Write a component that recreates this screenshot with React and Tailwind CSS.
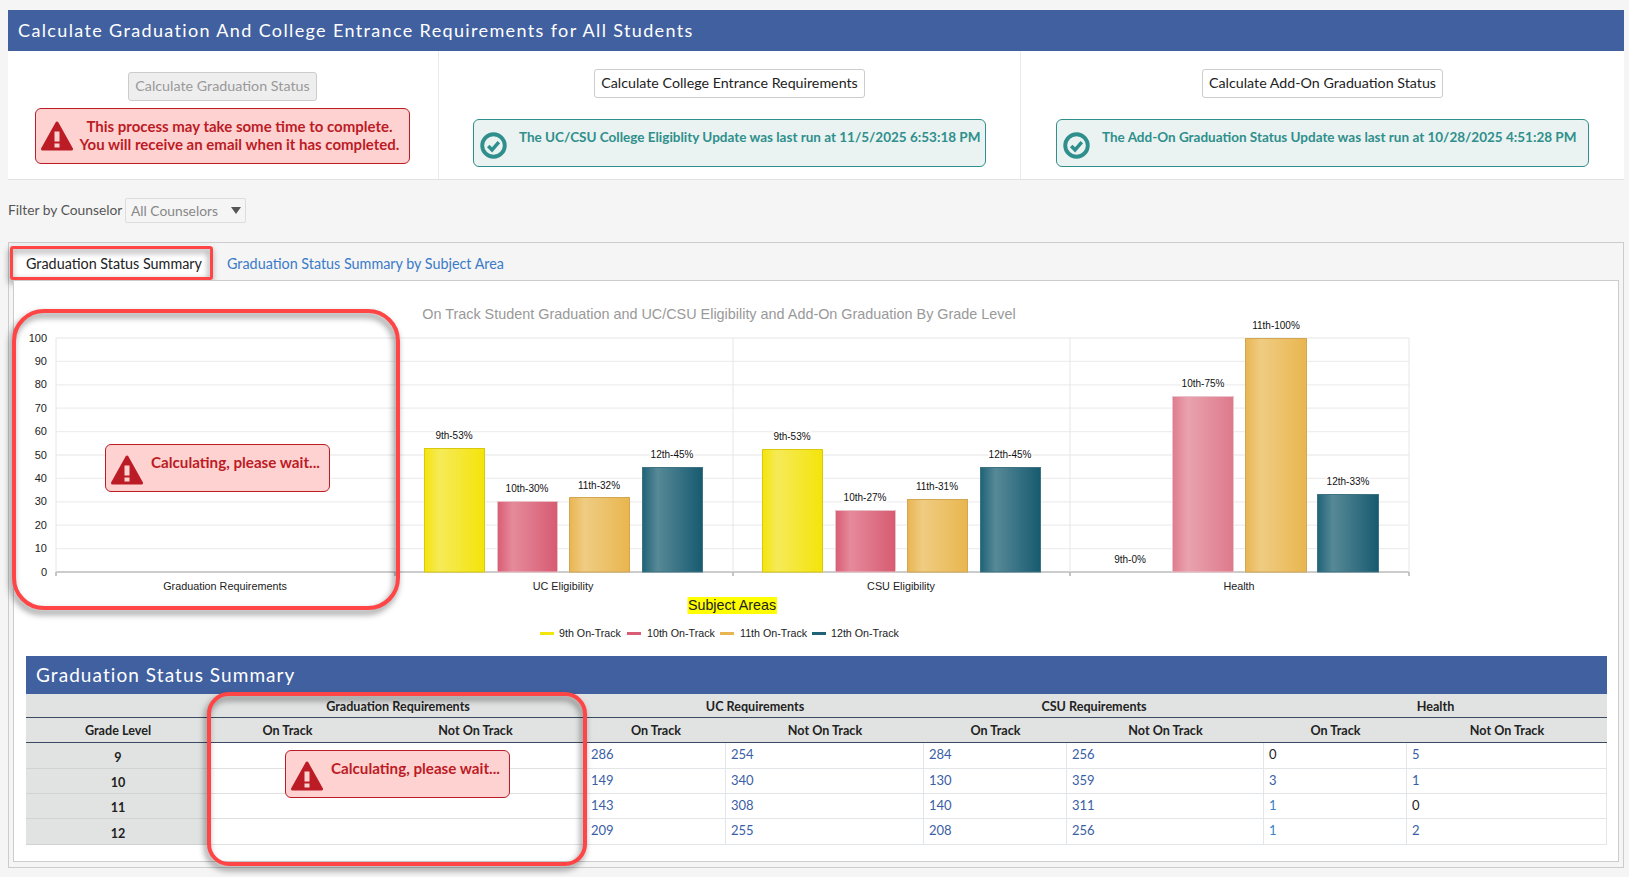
import React from 'react';

const gridYs = [338, 361.4, 384.8, 408.2, 431.6, 455, 478.4, 501.8, 525.2, 548.6, 572];
const axisY = 572;

const bars = [
  { id: 'yellow', x: 424, w: 60, top: 448, label: '9th-53%', lx: 454, ly: 435.5 },
  { id: 'pink', x: 497, w: 60, top: 501, label: '10th-30%', lx: 527, ly: 488.5 },
  { id: 'orange', x: 569, w: 60, top: 497, label: '11th-32%', lx: 599, ly: 485.5 },
  { id: 'teal', x: 642, w: 60, top: 467, label: '12th-45%', lx: 672, ly: 454.5 },
  { id: 'yellow', x: 762, w: 60, top: 449, label: '9th-53%', lx: 792, ly: 436.5 },
  { id: 'pink', x: 835, w: 60, top: 510, label: '10th-27%', lx: 865, ly: 497.5 },
  { id: 'orange', x: 907, w: 60, top: 499, label: '11th-31%', lx: 937, ly: 486.5 },
  { id: 'teal', x: 980, w: 60, top: 467, label: '12th-45%', lx: 1010, ly: 454.5 },
  { id: 'pinkLight', x: 1172, w: 61, top: 396, label: '10th-75%', lx: 1203, ly: 383 },
  { id: 'orange', x: 1245, w: 61, top: 338, label: '11th-100%', lx: 1276, ly: 325 },
  { id: 'teal', x: 1317, w: 61, top: 494, label: '12th-33%', lx: 1348, ly: 481 },
];

const gradients = [
  { id: 'yellow', a: '#f4e40e', b: '#f6ea58', c: '#f4e40a' },
  { id: 'pink', a: '#d95d75', b: '#e58a9a', c: '#d75b72' },
  { id: 'pinkLight', a: '#df7c8e', b: '#e9a2ae', c: '#de7a8c' },
  { id: 'orange', a: '#e9b553', b: '#efcc82', c: '#e9b64f' },
  { id: 'teal', a: '#1f6377', b: '#578997', c: '#175a70' },
];

const strokes = { yellow: '#d9c90c', pink: '#e7c1c8', pinkLight: '#e9c4cb', orange: '#d2a653', teal: '#3f7283' };

const legend = [
  { color: '#f4e40e', x: 540, tx: 559, label: '9th On-Track' },
  { color: '#d95d75', x: 627, tx: 647, label: '10th On-Track' },
  { color: '#e9b553', x: 720, tx: 740, label: '11th On-Track' },
  { color: '#1f6377', x: 812, tx: 831, label: '12th On-Track' },
];

const rows = [
  { grade: 9, uc: [286, 254], csu: [284, 256], health: [0, 5] },
  { grade: 10, uc: [149, 340], csu: [130, 359], health: [3, 1] },
  { grade: 11, uc: [143, 308], csu: [140, 311], health: [1, 0] },
  { grade: 12, uc: [209, 255], csu: [208, 256], health: [1, 2] },
];

function WarningIcon({ className }) {
  return (
    <svg viewBox="0 0 32 30" className={className}>
      <path d="M16 2 L30.5 28 L1.5 28 Z" fill="#bb1c25" stroke="#bb1c25" strokeWidth="3" strokeLinejoin="round" />
      <rect x="13.5" y="10.5" width="5" height="10" fill="#ffd2d2" />
      <rect x="13.5" y="22.5" width="5" height="4" fill="#ffd2d2" />
    </svg>
  );
}

function CheckIcon() {
  return (
    <svg viewBox="0 0 28 28" className="w-[27px] h-[27px] shrink-0">
      <circle cx="14" cy="14" r="11.7" fill="none" stroke="#2f8f8c" strokeWidth="4" />
      <path d="M8.5 14.5 L12.5 18.5 L19.5 10.5" fill="none" stroke="#2f8f8c" strokeWidth="3.6" />
    </svg>
  );
}

function RunAlert({ children, className }) {
  return (
    <div className={`flex items-start gap-[12px] h-[48px] bg-[#eaf3f1] border border-[#2f8f8c] rounded-[6px] pl-[6px] pt-[9px] ${className}`}>
      <div className="pt-[3px]"><CheckIcon /></div>
      <p className="text-[13.5px] leading-[16px] font-bold text-[#2f8f8c] whitespace-nowrap">{children}</p>
    </div>
  );
}

function CalcAlert({ className }) {
  return (
    <div className={`absolute w-[225px] h-[48px] flex items-start gap-[8px] bg-[#ffd2d2] border border-[#bb1c25] rounded-[6px] pl-[5px] pt-[8px] ${className}`}>
      <WarningIcon className="w-[32px] h-[30px] shrink-0 mt-[2px]" />
      <p className="text-[15.2px] leading-[18px] font-bold text-[#bb1c25] whitespace-nowrap">Calculating, please wait...</p>
    </div>
  );
}

function NumCell({ value, light }) {
  let color = 'text-[#3a5ea5]';
  if (value === 0) color = 'text-[#222]';
  if (light) color = 'text-[#3a82c4]';
  return <td className={`pl-[5px] pb-[1px] border-b border-r border-[#e2e6e8] text-[13px] ${color}`}>{value}</td>;
}

export default function App() {
  return (
    <div className="min-h-screen bg-[#f5f5f5] pt-[10px] pl-[8px] pr-[5px] font-[family-name:Lato,sans-serif] overflow-hidden">
      <div className="h-[41px] bg-[#41609f] flex items-center pl-[10px] text-[18px] tracking-[1.36px] text-white">
        Calculate Graduation And College Entrance Requirements for All Students
      </div>

      <div className="flex h-[129px] bg-white border-b border-[#e2e2e2]">
        <div className="w-[431px] pr-[1px] border-r border-[#e4ecef] flex flex-col items-center pt-[21px]">
          <button className="h-[29px] w-[189px] pb-[2px] bg-[#eeeeee] border border-[#cccccc] rounded-[3px] text-[14.3px] text-[#999] whitespace-nowrap">
            Calculate Graduation Status
          </button>
          <div className="mt-[7px] w-[375px] h-[56px] flex items-center bg-[#ffd2d2] border border-[#bb1c25] rounded-[6px] pl-[5px]">
            <WarningIcon className="w-[32px] h-[30px] shrink-0" />
            <p className="flex-1 text-center text-[15px] leading-[18px] font-bold text-[#bb1c25] whitespace-nowrap pr-[3px] pb-[3px]">
              This process may take some time to complete.<br />You will receive an email when it has completed.
            </p>
          </div>
        </div>

        <div className="w-[582px] border-r border-[#e4ecef] flex flex-col items-center pt-[18px]">
          <button className="h-[29px] w-[271px] pb-[2px] bg-white border border-[#cccccc] rounded-[3px] text-[14.25px] text-[#222] whitespace-nowrap">
            Calculate College Entrance Requirements
          </button>
          <RunAlert className="mt-[21px] w-[513px]">
            The UC/CSU College Eligiblity Update was last run at 11/5/2025 6:53:18 PM
          </RunAlert>
        </div>

        <div className="flex-1 flex flex-col items-center pt-[18px]">
          <button className="h-[29px] w-[241px] pb-[2px] bg-white border border-[#cccccc] rounded-[3px] text-[14.25px] text-[#222] whitespace-nowrap">
            Calculate Add-On Graduation Status
          </button>
          <RunAlert className="mt-[21px] w-[533px]">
            The Add-On Graduation Status Update was last run at 10/28/2025 4:51:28 PM
          </RunAlert>
        </div>
      </div>

      <div className="flex items-center h-[25px] mt-[18px] text-[13.8px] text-[#555]">
        <span className="w-[117px]">Filter by Counselor</span>
        <div className="w-[121px] h-[25px] flex items-center justify-between border border-[#ddd] rounded-[2px] pl-[5px] pr-[4px] text-[#888]">
          <span className="pt-[1px]">All Counselors</span>
          <span className="w-0 h-0 border-l-[5px] border-r-[5px] border-t-[7px] border-l-transparent border-r-transparent border-t-[#555]"></span>
        </div>
      </div>

      <div className="relative mt-[19px] h-[626px] border border-[#cccccc] px-[4px]">
        <div className="flex h-[37px] items-end text-[14.35px]">
          <div className="h-[35px] w-[200px] pt-[2px] bg-white pl-[13px] flex items-center text-[#222]">Graduation Status Summary</div>
          <div className="h-[35px] pt-[2px] pl-[14px] flex items-center text-[#3a7bc8]">Graduation Status Summary by Subject Area</div>
        </div>
        <div className="absolute left-[1px] top-[3px] w-[203px] h-[34px] border-[3px] border-[#ff4545] rounded-[3px] drop-shadow-[-1px_3px_3px_rgba(0,0,0,0.5)]"></div>

        <div className="relative h-[582px] bg-white border border-[#cccccc]">
          <svg viewBox="14 281 1604 375" className="block w-[1604px] h-[375px] font-[family-name:'Liberation_Sans',Arial,sans-serif]">
            <defs>
              {gradients.map((g) => (
                <linearGradient key={g.id} id={g.id} x1="0" x2="1" y1="0" y2="0">
                  <stop offset="0" stopColor={g.a} />
                  <stop offset="0.25" stopColor={g.b} />
                  <stop offset="1" stopColor={g.c} />
                </linearGradient>
              ))}
            </defs>
            <text x="719" y="319" textAnchor="middle" fontSize="14.4" fill="#999">
              On Track Student Graduation and UC/CSU Eligibility and Add-On Graduation By Grade Level
            </text>

            {gridYs.map((y, i) => (
              <line key={y} x1="56" x2="1409" y1={y} y2={y} stroke={i === 10 ? '#999' : '#eeeeee'} strokeWidth={i === 10 ? 1 : 1.3} />
            ))}
            {[56, 395, 733, 1070, 1409].map((x) => (
              <line key={x} x1={x} x2={x} y1="338" y2="576" stroke="#e6e6e6" />
            ))}
            {[56, 395, 733, 1070, 1409].map((x) => (
              <line key={x} x1={x} x2={x} y1="572" y2="576" stroke="#999" />
            ))}
            {gridYs.map((y, i) => (
              <text key={y} x="47" y={y + 3.5} textAnchor="end" fontSize="11" fill="#222">{100 - i * 10}</text>
            ))}

            {bars.map((b) => (
              <g key={b.x}>
                <rect x={b.x + 0.5} y={b.top + 0.5} width={b.w} height={axisY - b.top - 0.5} fill={`url(#${b.id})`} stroke={strokes[b.id]} />
                <text x={b.lx} y={b.ly + 3.5} textAnchor="middle" fontSize="10" fill="#111" stroke="#fff" strokeWidth="3" paintOrder="stroke">{b.label}</text>
              </g>
            ))}
            <text x="1130" y="563" textAnchor="middle" fontSize="10" fill="#111" stroke="#fff" strokeWidth="3" paintOrder="stroke">9th-0%</text>

            <text x="225" y="590" textAnchor="middle" fontSize="10.8" fill="#222">Graduation Requirements</text>
            <text x="563" y="590" textAnchor="middle" fontSize="10.8" fill="#222">UC Eligibility</text>
            <text x="901" y="590" textAnchor="middle" fontSize="10.8" fill="#222">CSU Eligibility</text>
            <text x="1239" y="590" textAnchor="middle" fontSize="10.8" fill="#222">Health</text>

            <rect x="687.5" y="597" width="89.5" height="17" fill="#ffff00" />
            <text x="732" y="610" textAnchor="middle" fontSize="14.3" fill="#222">Subject Areas</text>

            {legend.map((l) => (
              <g key={l.label}>
                <rect x={l.x} y="632" width="14" height="3" fill={l.color} />
                <text x={l.tx} y="637" fontSize="10.7" fill="#222">{l.label}</text>
              </g>
            ))}
          </svg>

          <div className="mx-[12px] w-[1581px]">
            <div className="h-[38px] bg-[#41609f] flex items-center pl-[10px] text-[19px] tracking-[1.07px] text-white">Graduation Status Summary</div>
            <table className="table-fixed w-[1581px] border-separate border-spacing-0">
              <colgroup>
                {[184, 155, 221, 140, 198, 143, 197, 143, 200].map((w, i) => (
                  <col key={i} style={{ width: w }} />
                ))}
              </colgroup>
              <thead className="text-[12.6px] font-bold text-[#222] bg-[#e1e3e3]">
                <tr className="h-[24px]">
                  <th className="border-b border-[#3b4a63]"></th>
                  <th colSpan={2} className="border-b border-[#3b4a63] pt-[4px]">Graduation Requirements</th>
                  <th colSpan={2} className="border-b border-[#3b4a63] pt-[4px]">UC Requirements</th>
                  <th colSpan={2} className="border-b border-[#3b4a63] pt-[4px]">CSU Requirements</th>
                  <th colSpan={2} className="border-b border-[#3b4a63] pt-[4px]">Health</th>
                </tr>
                <tr className="h-[25px]">
                  <th className="border-b border-[#3b4a63] pt-[2px]">Grade Level</th>
                  {[0, 1, 2, 3].map((i) => (
                    <React.Fragment key={i}>
                      <th className="border-b border-[#3b4a63] pt-[2px]">On Track</th>
                      <th className="border-b border-[#3b4a63] pt-[2px]">Not On Track</th>
                    </React.Fragment>
                  ))}
                </tr>
              </thead>
              <tbody>
                {rows.map((r, i) => (
                  <tr key={r.grade} className={i === 0 || i === 3 ? 'h-[26px]' : 'h-[25px]'}>
                    <td className="bg-[#e1e3e3] border-b border-[#d0d3d3] text-center text-[12.6px] font-bold text-[#222] pt-[5px]">{r.grade}</td>
                    <td className="border-b border-[#e0e0e0]"></td>
                    <td className="border-b border-[#e0e0e0]"></td>
                    <NumCell value={r.uc[0]} />
                    <NumCell value={r.uc[1]} />
                    <NumCell value={r.csu[0]} />
                    <NumCell value={r.csu[1]} />
                    <NumCell value={r.health[0]} light={r.health[0] === 1} />
                    <NumCell value={r.health[1]} />
                  </tr>
                ))}
              </tbody>
            </table>
          </div>

          <div className="absolute -left-[2px] top-[28px] w-[388px] h-[301px] border-[4px] border-[#ff4545] rounded-[32px] drop-shadow-[-2px_4px_3px_rgba(0,0,0,0.5)]"></div>
          <CalcAlert className="left-[91px] top-[163px]" />
          <div className="absolute left-[193px] top-[411px] w-[380px] h-[174px] border-[4px] border-[#ff4545] rounded-[22px] drop-shadow-[-2px_4px_3px_rgba(0,0,0,0.5)]"></div>
          <CalcAlert className="left-[271px] top-[469px]" />
        </div>
      </div>
    </div>
  );
}
